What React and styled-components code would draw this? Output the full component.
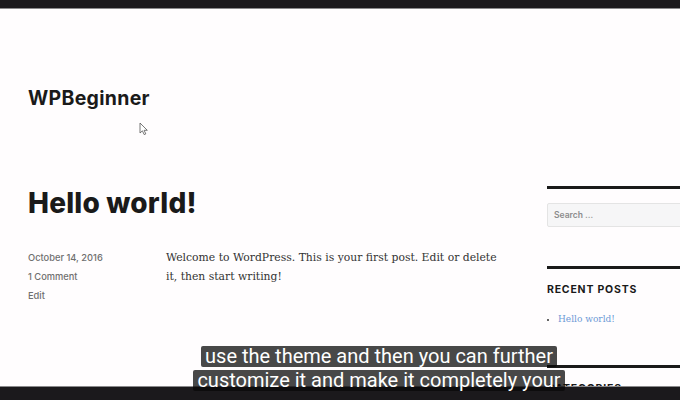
import React from 'react'
import styled, { createGlobalStyle } from 'styled-components'

const Global = createGlobalStyle`
  html, body { margin: 0; padding: 0; background: #1b191c; }
  body { font-family: Inter, "Liberation Sans", sans-serif; }
`;

const Screen = styled.div`
  position: relative;
  width: 680px;
  height: 400px;
  overflow: hidden;
  display: flex;
  flex-direction: column;
  background: #1b191c;
`;

const Bar = styled.div`
  flex: none;
  height: ${props => props.h}px;
  background: #1b191c;
  border-${props => props.edge}: 1px solid #8a898b;
`;

const Page = styled.div`
  flex: 1;
  display: flex;
  background: #fffdfe;
  padding-left: 28px;
  overflow: hidden;
`;

const Main = styled.div`
  flex: none;
  width: 519px;
  display: flex;
  flex-direction: column;
`;

const SiteTitle = styled.div`
  margin-top: 77px;
  font-family: Inter, sans-serif;
  font-weight: 700;
  font-size: 19.5px;
  line-height: 24px;
  color: #1a1a1a;
  letter-spacing: 0.3px;
`;

const PostTitle = styled.h1`
  margin: 75px 0 0;
  font-family: Inter, sans-serif;
  font-weight: 800;
  font-size: 28px;
  line-height: 36px;
  color: #1a1a1a;
  letter-spacing: 0.2px;
`;

const Entry = styled.div`
  margin-top: 27px;
  display: flex;
`;

const Meta = styled.div`
  flex: none;
  width: 138px;
  display: flex;
  flex-direction: column;
`;

const MetaItem = styled.span`
  font-family: Inter, sans-serif;
  font-weight: 500;
  font-size: 9.3px;
  line-height: 19px;
  color: #6f6f6f;
`;

const Body = styled.p`
  margin: 0;
  width: 340px;
  font-family: "DejaVu Serif", serif;
  font-size: 10.8px;
  line-height: 19px;
  color: #333;
`;

const Sidebar = styled.aside`
  flex: none;
  width: 170px;
  display: flex;
  flex-direction: column;
  padding-top: 177px;
`;

const Widget = styled.section`
  flex: none;
  border-top: 3px solid #1a1a1a;
  padding-top: ${props => props.pad}px;
  height: ${props => props.h}px;
  box-sizing: border-box;
`;

const Search = styled.div`
  height: 24px;
  box-sizing: border-box;
  border: 1px solid #e4e4e4;
  border-radius: 2px;
  background: #f6f6f7;
  padding-left: 6px;
  display: flex;
  align-items: center;
  font-family: Inter, sans-serif;
  font-weight: 600;
  font-size: 8.5px;
  color: #8c8c8c;
`;

const WidgetTitle = styled.h2`
  margin: 0;
  font-family: Inter, sans-serif;
  font-weight: 700;
  font-size: 10.5px;
  line-height: 14px;
  letter-spacing: 0.8px;
  color: #1a1a1a;
`;

const List = styled.ul`
  margin: 15px 0 0;
  padding-left: 11px;
  font-family: "DejaVu Serif", serif;
  font-size: 9px;
  line-height: 14px;
  color: #333;
  li::marker { font-size: 8px; }
`;

const Link = styled.a`
  color: #6c9ad6;
  text-decoration: none;
`;

const Captions = styled.div`
  position: absolute;
  left: 78px;
  right: 0;
  top: 346px;
  display: flex;
  flex-direction: column;
  align-items: center;
  gap: 3px;
`;

const Caption = styled.span`
  background: rgba(8, 8, 8, 0.74);
  color: #fff;
  font-family: Roboto, sans-serif;
  font-size: 20px;
  line-height: 21px;
  padding: 0 4px;
  border-radius: 2px;
`;

const Pointer = styled.svg`
  position: absolute;
  left: 139px;
  top: 122px;
`;

export default function App() {
  return (
    <Screen>
      <Global />
      <Bar h={8} edge="bottom" />
      <Page>
        <Main>
          <SiteTitle>WPBeginner</SiteTitle>
          <PostTitle>Hello world!</PostTitle>
          <Entry>
            <Meta>
              <MetaItem>October 14, 2016</MetaItem>
              <MetaItem>1 Comment</MetaItem>
              <MetaItem>Edit</MetaItem>
            </Meta>
            <Body>
              Welcome to WordPress. This is your first post. Edit or delete it, then start writing!
            </Body>
          </Entry>
        </Main>
        <Sidebar>
          <Widget pad={14} h={80}>
            <Search>Search …</Search>
          </Widget>
          <Widget pad={14} h={99}>
            <WidgetTitle>RECENT POSTS</WidgetTitle>
            <List>
              <li><Link>Hello world!</Link></li>
            </List>
          </Widget>
          <Widget pad={14} h={40}>
            <WidgetTitle>CATEGORIES</WidgetTitle>
          </Widget>
        </Sidebar>
      </Page>
      <Bar h={13} edge="top" />
      <Captions>
        <Caption>use the theme and then you can further</Caption>
        <Caption>customize it and make it completely your</Caption>
      </Captions>
      <Pointer width="10" height="14" viewBox="0 0 10 14">
        <path d="M1 1 L1 11 L3.4 8.8 L5.2 12.6 L6.8 11.9 L5.1 8.3 L8.3 8.3 Z" fill="#fff" stroke="#555" strokeWidth="0.8" strokeLinejoin="round" />
      </Pointer>
    </Screen>
  )
}
